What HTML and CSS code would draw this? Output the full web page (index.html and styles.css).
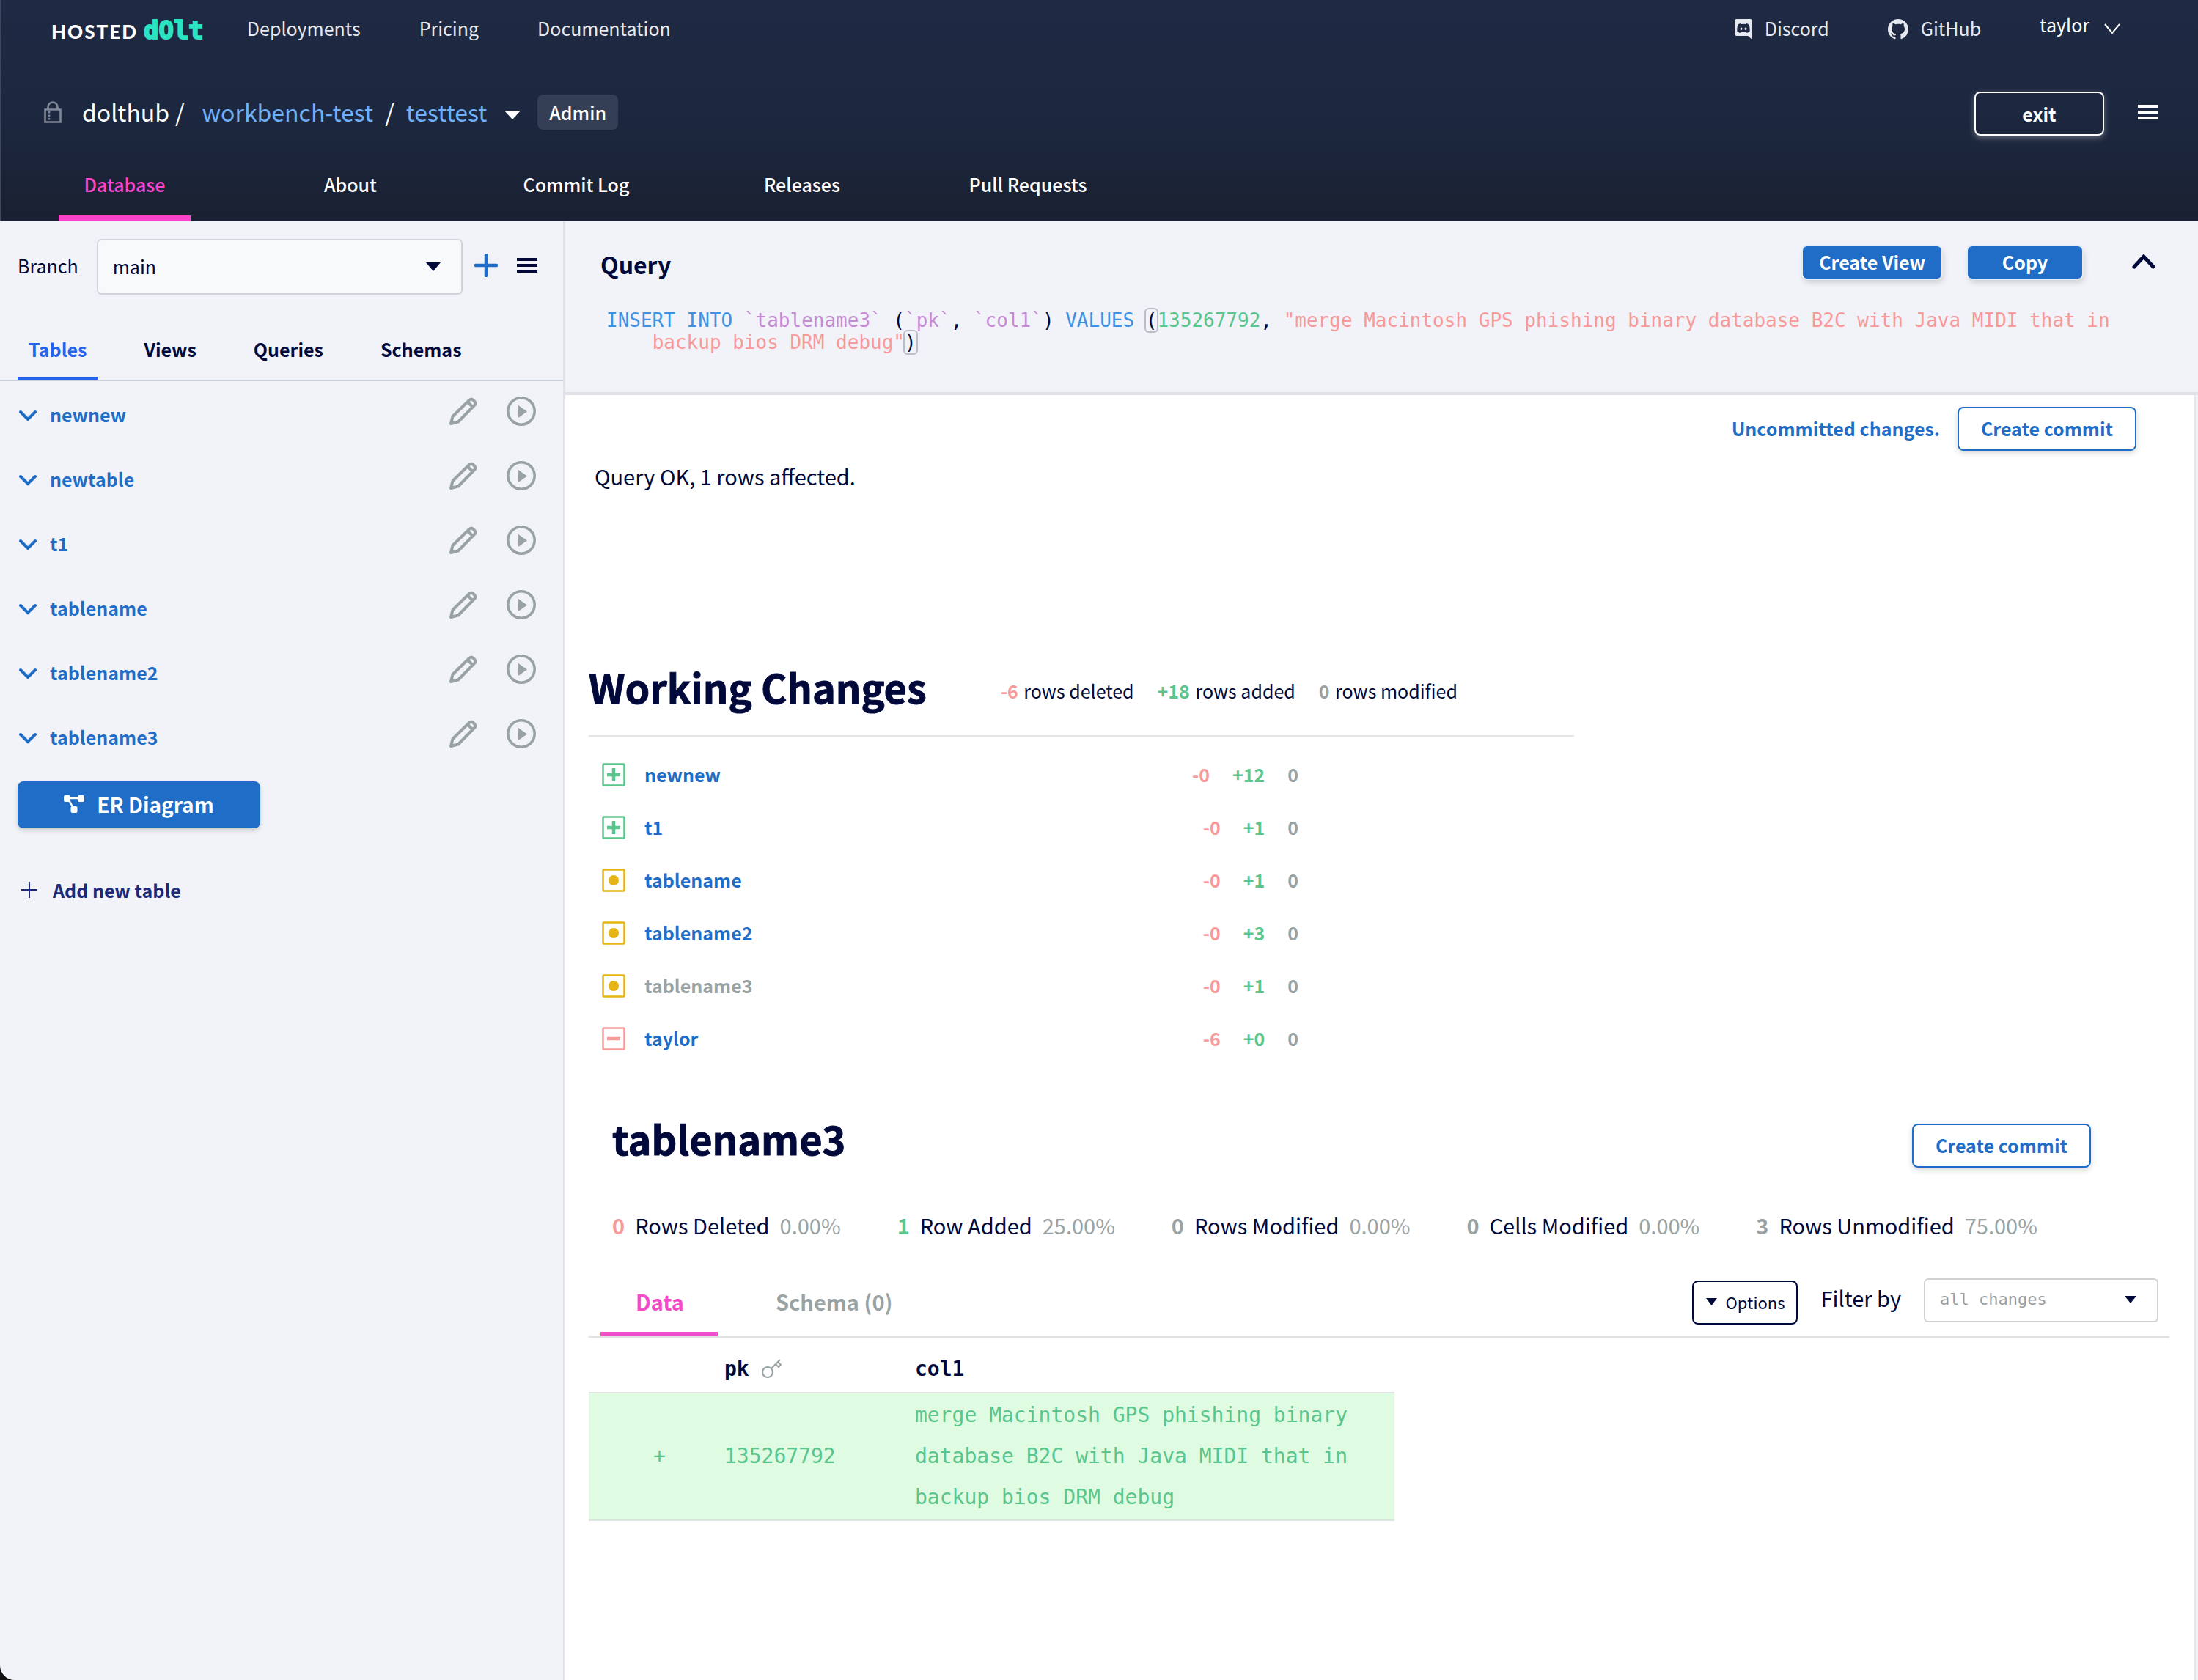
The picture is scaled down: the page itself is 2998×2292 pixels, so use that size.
FILE: index.html
```html
<!DOCTYPE html>
<html lang="en">
<head>
<meta charset="utf-8">
<title>dolthub/workbench-test/testtest</title>
<link rel="stylesheet" href="styles.css">
</head>
<body>
<svg class="sprite" aria-hidden="true">
  <symbol id="caret" viewBox="0 0 20 12"><path d="M0 0h20L10 12z" fill="currentColor"/></symbol>
  <symbol id="bars" viewBox="0 0 28 20"><path d="M0 0h28v4H0zM0 8h28v4H0zM0 16h28v4H0z" fill="currentColor"/></symbol>
  <symbol id="chevron" viewBox="0 0 24 16"><path d="M2 3l10 10L22 3" fill="none" stroke="currentColor" stroke-width="4" stroke-linecap="round"/></symbol>
  <symbol id="pencil" viewBox="0 0 38 38"><path d="M2 36L4.500 26 27.500 3.500Q30 1.500 32 3.500L34.500 6Q36.500 8.500 34.500 10.500L12 33.500ZM25 6.500L31.500 13" fill="none" stroke="currentColor" stroke-width="4" stroke-linejoin="round"/><path d="M1 37l2-7 5 5z" fill="currentColor"/></symbol>
  <symbol id="play" viewBox="0 0 40 40"><circle cx="20" cy="20" r="18.200" fill="none" stroke="currentColor" stroke-width="3.600"/><path d="M16 12v17l12-8.500z" fill="currentColor"/></symbol>
  <symbol id="added" viewBox="0 0 32 32"><rect x="1.500" y="1.500" width="29" height="29" rx="1" fill="none" stroke="currentColor" stroke-width="2.500"/><path d="M16 7v18M7 16h18" stroke="currentColor" stroke-width="4.500"/></symbol>
  <symbol id="modified" viewBox="0 0 32 32"><rect x="1.500" y="1.500" width="29" height="29" rx="1" fill="none" stroke="currentColor" stroke-width="2.500"/><circle cx="16" cy="16" r="7" fill="currentColor"/></symbol>
  <symbol id="removed" viewBox="0 0 32 32"><rect x="1.500" y="1.500" width="29" height="29" rx="1" fill="none" stroke="currentColor" stroke-width="2.500"/><path d="M7 16h18" stroke="currentColor" stroke-width="4.500"/></symbol>
</svg>
<div class="app">
  <header class="header">
    <nav class="topnav">
      <a class="logo" href="#"><span class="logo-host">HOSTED</span><span class="logo-dolt">dOlt</span></a>
      <a href="#">Deployments</a>
      <a href="#">Pricing</a>
      <a href="#">Documentation</a>
      <a class="push with-icon" href="#"><svg width="24" height="28" viewBox="0 0 24 28"><path fill="currentColor" fill-rule="evenodd" d="M3 0h18a3 3 0 0 1 3 3v25l-6-5H3a3 3 0 0 1-3-3V3a3 3 0 0 1 3-3zM8 6C6 6.500 5 7 4.500 8 3.300 11 3 14 3.500 17c1.500 1.300 3 1.700 4 1.800l1-1.500c2 .7 5 .7 7 0l1 1.500c1 0 2.700-.6 4-1.800.5-3 .2-6-1-9-.6-1-2-1.600-3.500-2l-.6 1q-3.400-.5-6.800 0zM9 11.500a1.500 1.800 0 1 1 0 3.600 1.500 1.800 0 1 1 0-3.600zM15 11.500a1.500 1.800 0 1 1 0 3.600 1.500 1.800 0 1 1 0-3.600z"/></svg>Discord</a>
      <a class="with-icon github" href="#"><svg width="28" height="28" viewBox="0 0 16 16"><path fill="currentColor" d="M8 0C3.580 0 0 3.580 0 8c0 3.540 2.290 6.530 5.470 7.590.4.070.55-.17.55-.38 0-.19-.01-.82-.01-1.490-2.010.37-2.530-.49-2.690-.94-.09-.23-.48-.94-.82-1.130-.28-.15-.68-.52-.01-.53.63-.01 1.080.58 1.230.82.72 1.210 1.870.87 2.330.66.070-.52.28-.87.51-1.070-1.780-.2-3.640-.89-3.640-3.950 0-.87.31-1.590.82-2.150-.08-.2-.36-1.020.08-2.120 0 0 .67-.21 2.200.82.64-.18 1.320-.27 2-.27s1.360.09 2 .27c1.530-1.040 2.200-.82 2.200-.82.44 1.100.16 1.920.08 2.120.51.56.82 1.270.82 2.150 0 3.070-1.870 3.750-3.650 3.950.29.25.54.73.54 1.480 0 1.070-.01 1.930-.01 2.200 0 .21.15.46.55.38A8.010 8.010 0 0 0 16 8c0-4.420-3.580-8-8-8z"/></svg>GitHub</a>
      <button class="user" type="button">taylor<svg width="22" height="16" viewBox="0 0 22 16"><path d="M1 2l10 12L21 2" fill="none" stroke="currentColor" stroke-width="2"/></svg></button>
    </nav>
    <div class="crumbs">
      <svg class="lock" width="24" height="30" viewBox="0 0 24 30"><path d="M1.500 11.500h21v17h-21zM5.500 11V8a6.500 6.500 0 0 1 13 0v3M7 14v2.500M7 18.500v2.500M7 23v2.500" fill="none" stroke="currentColor" stroke-width="2.600"/></svg>
      <span class="owner">dolthub</span><span class="slash1">/</span>
      <a href="#">workbench-test</a><span class="slash2">/</span><a href="#">testtest</a>
      <svg class="crumb-caret" width="22" height="12" viewBox="0 0 20 12" preserveAspectRatio="none"><path d="M0 0h20L10 12z" fill="currentColor"/></svg>
      <span class="badge">Admin</span>
      <button class="exit" type="button">exit</button>
      <button class="icon-btn" type="button" aria-label="Menu"><svg width="28" height="20"><use href="#bars"/></svg></button>
    </div>
    <nav class="tabs">
      <a class="on" href="#">Database</a><a href="#">About</a><a href="#">Commit Log</a><a href="#">Releases</a><a href="#">Pull Requests</a>
    </nav>
  </header>
  <div class="body">
    <aside class="sidebar">
      <div class="branch">
        <label for="branch">Branch</label>
        <div class="select">
          <select id="branch"><option>main</option></select>
          <svg width="20" height="12"><use href="#caret"/></svg>
        </div>
        <button class="icon-btn blue" type="button" aria-label="New branch"><svg width="32" height="32" viewBox="0 0 32 32"><path d="M16 2v28M2 16h28" stroke="currentColor" stroke-width="4.500" stroke-linecap="round"/></svg></button>
        <button class="icon-btn" type="button" aria-label="Branch menu"><svg width="28" height="20"><use href="#bars"/></svg></button>
      </div>
      <nav class="side-tabs"><a class="on" href="#">Tables</a><a href="#">Views</a><a href="#">Queries</a><a href="#">Schemas</a></nav>
      <ul class="tables">
        <li><button class="name" type="button"><svg width="24" height="16"><use href="#chevron"/></svg>newnew</button><button class="icon-btn" type="button" aria-label="Edit newnew"><svg width="38" height="38"><use href="#pencil"/></svg></button><button class="icon-btn" type="button" aria-label="Query newnew"><svg width="40" height="40"><use href="#play"/></svg></button></li>
        <li><button class="name" type="button"><svg width="24" height="16"><use href="#chevron"/></svg>newtable</button><button class="icon-btn" type="button" aria-label="Edit newtable"><svg width="38" height="38"><use href="#pencil"/></svg></button><button class="icon-btn" type="button" aria-label="Query newtable"><svg width="40" height="40"><use href="#play"/></svg></button></li>
        <li><button class="name" type="button"><svg width="24" height="16"><use href="#chevron"/></svg>t1</button><button class="icon-btn" type="button" aria-label="Edit t1"><svg width="38" height="38"><use href="#pencil"/></svg></button><button class="icon-btn" type="button" aria-label="Query t1"><svg width="40" height="40"><use href="#play"/></svg></button></li>
        <li><button class="name" type="button"><svg width="24" height="16"><use href="#chevron"/></svg>tablename</button><button class="icon-btn" type="button" aria-label="Edit tablename"><svg width="38" height="38"><use href="#pencil"/></svg></button><button class="icon-btn" type="button" aria-label="Query tablename"><svg width="40" height="40"><use href="#play"/></svg></button></li>
        <li><button class="name" type="button"><svg width="24" height="16"><use href="#chevron"/></svg>tablename2</button><button class="icon-btn" type="button" aria-label="Edit tablename2"><svg width="38" height="38"><use href="#pencil"/></svg></button><button class="icon-btn" type="button" aria-label="Query tablename2"><svg width="40" height="40"><use href="#play"/></svg></button></li>
        <li><button class="name" type="button"><svg width="24" height="16"><use href="#chevron"/></svg>tablename3</button><button class="icon-btn" type="button" aria-label="Edit tablename3"><svg width="38" height="38"><use href="#pencil"/></svg></button><button class="icon-btn" type="button" aria-label="Query tablename3"><svg width="40" height="40"><use href="#play"/></svg></button></li>
      </ul>
      <button class="er" type="button"><svg width="28" height="24" viewBox="0 0 28 24"><path d="M4 4h18M6 5l8 14" stroke="currentColor" stroke-width="2.500"/><rect width="9" height="9" rx="2" fill="currentColor"/><rect x="19" width="9" height="9" rx="2" fill="currentColor"/><rect x="9.500" y="15" width="9" height="9" rx="2" fill="currentColor"/></svg>ER Diagram</button>
      <a class="add-table" href="#"><svg width="22" height="22" viewBox="0 0 22 22"><path d="M11 0v22M0 11h22" stroke="currentColor" stroke-width="2"/></svg>Add new table</a>
    </aside>
    <main class="main">
      <section class="query">
        <div class="query-head">
          <h2>Query</h2>
          <button class="small-btn" type="button">Create View</button>
          <button class="small-btn" type="button">Copy</button>
          <button class="icon-btn" type="button" aria-label="Collapse"><svg width="32" height="22" viewBox="0 0 32 22"><path d="M3 17L16 3l13 14" fill="none" stroke="currentColor" stroke-width="5" stroke-linecap="round"/></svg></button>
        </div>
        <pre class="sql"><span class="kw">INSERT</span> <span class="kw">INTO</span> <span class="id">`tablename3`</span> (<span class="id">`pk`</span>, <span class="id">`col1`</span>) <span class="kw">VALUES</span> <span class="match">(</span><span class="num">135267792</span>, <span class="str">"merge Macintosh GPS phishing binary database B2C with Java MIDI that in</span>
    <span class="str">backup bios DRM debug"</span><span class="match">)</span></pre>
      </section>
      <section class="result">
        <div class="uncommitted"><a href="#">Uncommitted changes.</a><button class="outline-btn" type="button">Create commit</button></div>
        <p class="ok">Query OK, 1 rows affected.</p>
        <div class="working-head">
          <h1>Working Changes</h1>
          <span><b class="red">-6</b> rows deleted</span>
          <span><b class="green">+18</b> rows added</span>
          <span><b class="gray">0</b> rows modified</span>
        </div>
        <ul class="changes">
          <li><svg class="green" width="32" height="32"><use href="#added"/></svg><a href="#">newnew</a><b class="red">-0</b><b class="green">+12</b><b class="gray">0</b></li>
          <li><svg class="green" width="32" height="32"><use href="#added"/></svg><a href="#">t1</a><b class="red">-0</b><b class="green">+1</b><b class="gray">0</b></li>
          <li><svg class="yellow" width="32" height="32"><use href="#modified"/></svg><a href="#">tablename</a><b class="red">-0</b><b class="green">+1</b><b class="gray">0</b></li>
          <li><svg class="yellow" width="32" height="32"><use href="#modified"/></svg><a href="#">tablename2</a><b class="red">-0</b><b class="green">+3</b><b class="gray">0</b></li>
          <li><svg class="yellow" width="32" height="32"><use href="#modified"/></svg><a class="gray" href="#">tablename3</a><b class="red">-0</b><b class="green">+1</b><b class="gray">0</b></li>
          <li><svg class="red" width="32" height="32"><use href="#removed"/></svg><a href="#">taylor</a><b class="red">-6</b><b class="green">+0</b><b class="gray">0</b></li>
        </ul>
        <div class="diff-head"><h2>tablename3</h2><button class="outline-btn" type="button">Create commit</button></div>
        <div class="stats">
          <span><b class="red">0</b>Rows Deleted<i>0.00%</i></span>
          <span><b class="green">1</b>Row Added<i>25.00%</i></span>
          <span><b class="gray">0</b>Rows Modified<i>0.00%</i></span>
          <span><b class="gray">0</b>Cells Modified<i>0.00%</i></span>
          <span><b class="gray">3</b>Rows Unmodified<i>75.00%</i></span>
        </div>
        <div class="diff-bar">
          <a class="on" href="#">Data</a><a href="#">Schema (0)</a>
          <button class="options" type="button"><svg width="15" height="10" viewBox="0 0 20 12" preserveAspectRatio="none"><path d="M0 0h20L10 12z" fill="currentColor"/></svg>Options</button>
          <label for="filter">Filter by</label>
          <div class="select filter">
            <select id="filter"><option>all changes</option></select>
            <svg width="16" height="10" viewBox="0 0 20 12" preserveAspectRatio="none"><path d="M0 0h20L10 12z" fill="currentColor"/></svg>
          </div>
        </div>
        <table class="data">
          <thead><tr><th></th><th>pk <svg width="27" height="27" viewBox="0 0 27 27"><circle cx="8" cy="18" r="7" fill="none" stroke="#9aa3a3" stroke-width="2.200"/><path d="M13 13L25 1M19 7l4 4 3-3-4-4" fill="none" stroke="#9aa3a3" stroke-width="2.200"/></svg></th><th>col1</th></tr></thead>
          <tbody><tr><td>+</td><td>135267792</td><td>merge Macintosh GPS phishing binary database B2C with Java MIDI that in backup bios DRM debug</td></tr></tbody>
        </table>
      </section>
    </main>
  </div>
</div>
</body>
</html>
```
FILE: styles.css
```css
* { box-sizing: border-box; }
body {
  margin: 0;
  background: #111;
  color: #00093a;
  font: 25px/36px "Noto Sans CJK SC", "Noto Sans", sans-serif;
}
a { color: #1f6dc6; text-decoration: none; }
button, select { font: inherit; color: inherit; background: none; border: 0; padding: 0; margin: 0; }
h1, h2, p, ul, pre { margin: 0; padding: 0; }
ul { list-style: none; }
b { font-weight: 600; }
svg { display: block; flex: none; }
.sprite { position: absolute; width: 0; height: 0; }
.icon-btn { display: flex; }
.red { color: #f79a99; }
.green { color: #5ac58c; }
.gray { color: #9aa3a3; }
.yellow { color: #e6b513; }

.app { min-height: 100vh; display: flex; flex-direction: column; background: #f1f3f8; border-bottom-left-radius: 20px; overflow: hidden; }

.header { height: 302px; background: linear-gradient(#1f2943, #1c2840 50%, #1a2031); border-left: 2px solid #3f485c; color: #fff; }
.topnav { display: flex; height: 76px; align-items: center; padding-left: 68px; padding-right: 106px; }
.topnav a { color: #e6e9ef; margin-right: 80px; }
.topnav .logo { display: flex; align-items: baseline; gap: 8px; margin-right: 59px; padding-top: 8px; }
.logo-host { color: #fff; font: 900 26px/36px Lato, sans-serif; letter-spacing: 2px; }
.logo-dolt { color: #29e3c1; font: bold 34px/36px "DejaVu Sans Mono", monospace; -webkit-text-stroke: 2px #29e3c1; }
.topnav .push { margin-left: auto; }
.with-icon { display: flex; align-items: center; gap: 17px; }
.with-icon svg { margin-top: 4px; }
.user { display: flex; align-items: center; gap: 20px; padding-bottom: 10px; }
.user svg { margin-top: 12px; }

.crumbs { display: flex; align-items: center; height: 154px; padding: 0 54px 0 58px; font-size: 32px; line-height: 48px; }
.crumbs a, .owner, .slash1, .slash2 { padding-bottom: 2px; }
.crumbs a { color: #6db0fb; }
.lock { color: #7f8696; margin-right: 28px; }
.slash1 { margin: 0 24px 0 8px; }
.slash2 { margin: 0 16px; }
.crumb-caret { margin: 8px 23px 0 24px; }
.badge { background: #343e54; border-radius: 8px; padding: 0 16px; font-size: 25px; font-weight: 500; }
.exit { margin: 4px 46px 0 auto; width: 177px; height: 60px; border: 2px solid #fff; border-radius: 8px; font-size: 25px; font-weight: 600; box-shadow: 0 3px 8px #ffffff55; }
.tabs { display: flex; padding-left: 14px; }
.tabs a { width: 180px; margin: 0 64px; height: 72px; line-height: 42px; text-align: center; color: #fff; font-weight: 500; white-space: nowrap; }
.tabs .on { color: #fc42c9; border-bottom: 8px solid #fc42c9; }

.body { flex: 1; display: flex; }
.sidebar { flex: none; width: 771px; border-right: 3px solid #e0e2e7; }
.branch { display: flex; align-items: center; padding: 24px 35px 0 24px; }
.branch label { padding-bottom: 4px; }
.branch .icon-btn { padding-bottom: 4px; }
.select { position: relative; flex: 1; margin: 0 16px 0 25px; }
.select select { width: 100%; height: 76px; border: 2px solid #d0d3da; border-radius: 6px; background: #f8f9fb; padding: 0 20px 2px; appearance: none; }
.select svg { position: absolute; right: 30px; top: 50%; margin-top: -6px; pointer-events: none; }
.branch .blue { color: #1f6dc6; margin-right: 26px; }
.side-tabs { display: flex; gap: 48px; padding: 56px 24px 0; border-bottom: 2px solid #cbcfd8; }
.side-tabs a { padding: 0 15px 20px; border-bottom: 4px solid transparent; font-weight: 600; color: #00093a; }
.side-tabs .on { color: #2563eb; border-color: #2563eb; }
.tables li { display: flex; align-items: center; height: 88px; padding: 0 37px 6px 26px; color: #9aa3a3; }
.tables .name { display: flex; align-items: center; gap: 18px; margin-right: auto; padding-top: 8px; color: #1f6dc6; font-weight: 600; }
.name svg { margin-top: 4px; }
.tables .icon-btn { margin-left: 40px; }
.er { display: flex; align-items: center; justify-content: center; gap: 17px; width: 331px; height: 64px; margin: 18px 0 0 24px; padding-bottom: 2px; background: #1f6dc6; color: #fff; border-radius: 8px; font-size: 28px; font-weight: 600; box-shadow: 0 3px 6px #0000002a; }
.add-table { display: flex; align-items: center; gap: 21px; margin: 66px 0 0 29px; color: #1c2a78; font-weight: 600; }

.main { flex: 1; min-width: 0; display: flex; flex-direction: column; }
.query { height: 237px; border-bottom: 4px solid #e0e2e6; padding: 24px 58px 0 48px; }
.query-head { display: flex; align-items: center; }
.query-head h2 { margin-right: auto; padding-top: 4px; font-size: 32px; line-height: 60px; font-weight: 600; }
.small-btn { height: 44px; padding: 0 22px 2px; border-radius: 6px; background: #1f6dc6; color: #fff; font-weight: 600; margin-right: 36px; min-width: 156px; box-shadow: 0 0 0 2px #e6ebf3, 2px 5px 8px #0000002c; }
.query-head .icon-btn { margin-left: 32px; }
.sql { margin: 32px 0 0 8px; font: 26px/30px "DejaVu Sans Mono", monospace; }
.kw { color: #3f92e3; }
.id { color: #c78bd6; }
.num { color: #5ac58c; }
.str { color: #f79a99; }
.match { border-radius: 4px; box-shadow: 0 0 0 2px #b9bec9; }

.result { flex: 1; background: #fff; margin-right: 3px; border-right: 2px solid #e6e7ea; padding: 16px 34px 0 32px; }
.uncommitted { display: flex; justify-content: flex-end; align-items: center; gap: 24px; padding-right: 45px; font-weight: 600; }
.uncommitted a { padding-bottom: 2px; }
.outline-btn { height: 60px; width: 244px; padding-bottom: 2px; border: 2px solid #1f6dc6; border-radius: 8px; background: #fff; color: #1f6dc6; font-weight: 600; box-shadow: 0 3px 8px #0000002a; }
.ok { margin: 10px 0 0 8px; font-size: 29px; line-height: 48px; }
.working-head { display: flex; align-items: center; width: 1344px; margin-top: 216px; padding-bottom: 18px; border-bottom: 2px solid #e4e4e6; }
.working-head h1 { margin-right: 101px; font-size: 54px; line-height: 96px; font-weight: 700; -webkit-text-stroke: 1px; }
.working-head span { margin-right: 32px; padding-top: 10px; }
.working-head b { margin-right: 2px; }
.changes { width: 1000px; padding: 16px 32px 0 18px; }
.changes li { display: flex; align-items: center; height: 72px; font-weight: 600; }
.changes a { margin-left: 26px; margin-right: auto; }
.changes a, .changes b { padding-bottom: 2px; }
.changes a.gray { color: #9aa3a3; }
.changes b { margin-left: 31px; }
.diff-head { display: flex; justify-content: space-between; align-items: flex-end; margin: 60px 107px 0 32px; }
.diff-head h2 { font-size: 54px; line-height: 80px; font-weight: 700; -webkit-text-stroke: 1px; }
.stats { display: flex; gap: 77px; margin: 54px 0 0 32px; font-size: 29px; line-height: 48px; white-space: nowrap; }
.stats span { display: flex; gap: 14px; }
.stats i { font-style: normal; color: #9aa3a3; }
.diff-bar { display: flex; align-items: center; height: 100px; margin-top: 30px; padding: 0 15px 0 16px; border-bottom: 2px solid #e0e2e4; font-size: 29px; }
.diff-bar a { align-self: stretch; padding: 32px 46px 0 48px; margin-right: 31px; font-weight: 600; color: #9aa3a3; }
.diff-bar .on { color: #f44bc8; border-bottom: 6px solid #f44bc8; }
.options { display: flex; align-items: center; gap: 12px; margin: 6px 0 0 auto; height: 60px; width: 144px; padding: 0 17px 3px; border: 2px solid #00093a; border-radius: 8px; font-size: 22px; }
.diff-bar label { margin: 0 0 0 32px; padding-bottom: 8px; }
.filter { flex: none; width: 320px; margin: 0 0 0 31px; }
.filter select { height: 60px; border-color: #cfd1d3; background: #fff; color: #9a9ea0; font: 22px/30px "DejaVu Sans Mono", monospace; }
.data { width: 1099px; border-collapse: collapse; text-align: left; font: 28px/56px "DejaVu Sans Mono", monospace; }
.data th { height: 75px; padding: 12px 0 0; font-weight: bold; }
.data th svg { display: inline-block; vertical-align: -4px; }
.data td { background: #dffce3; border: solid #dde4e0; border-width: 2px 0; color: #5ac58c; padding: 2px 0; }
.data td:first-child, .data th:first-child { width: 185px; padding-left: 88px; }
.data td:nth-child(2) { width: 260px; }
.data td:last-child { padding-right: 56px; }
```
